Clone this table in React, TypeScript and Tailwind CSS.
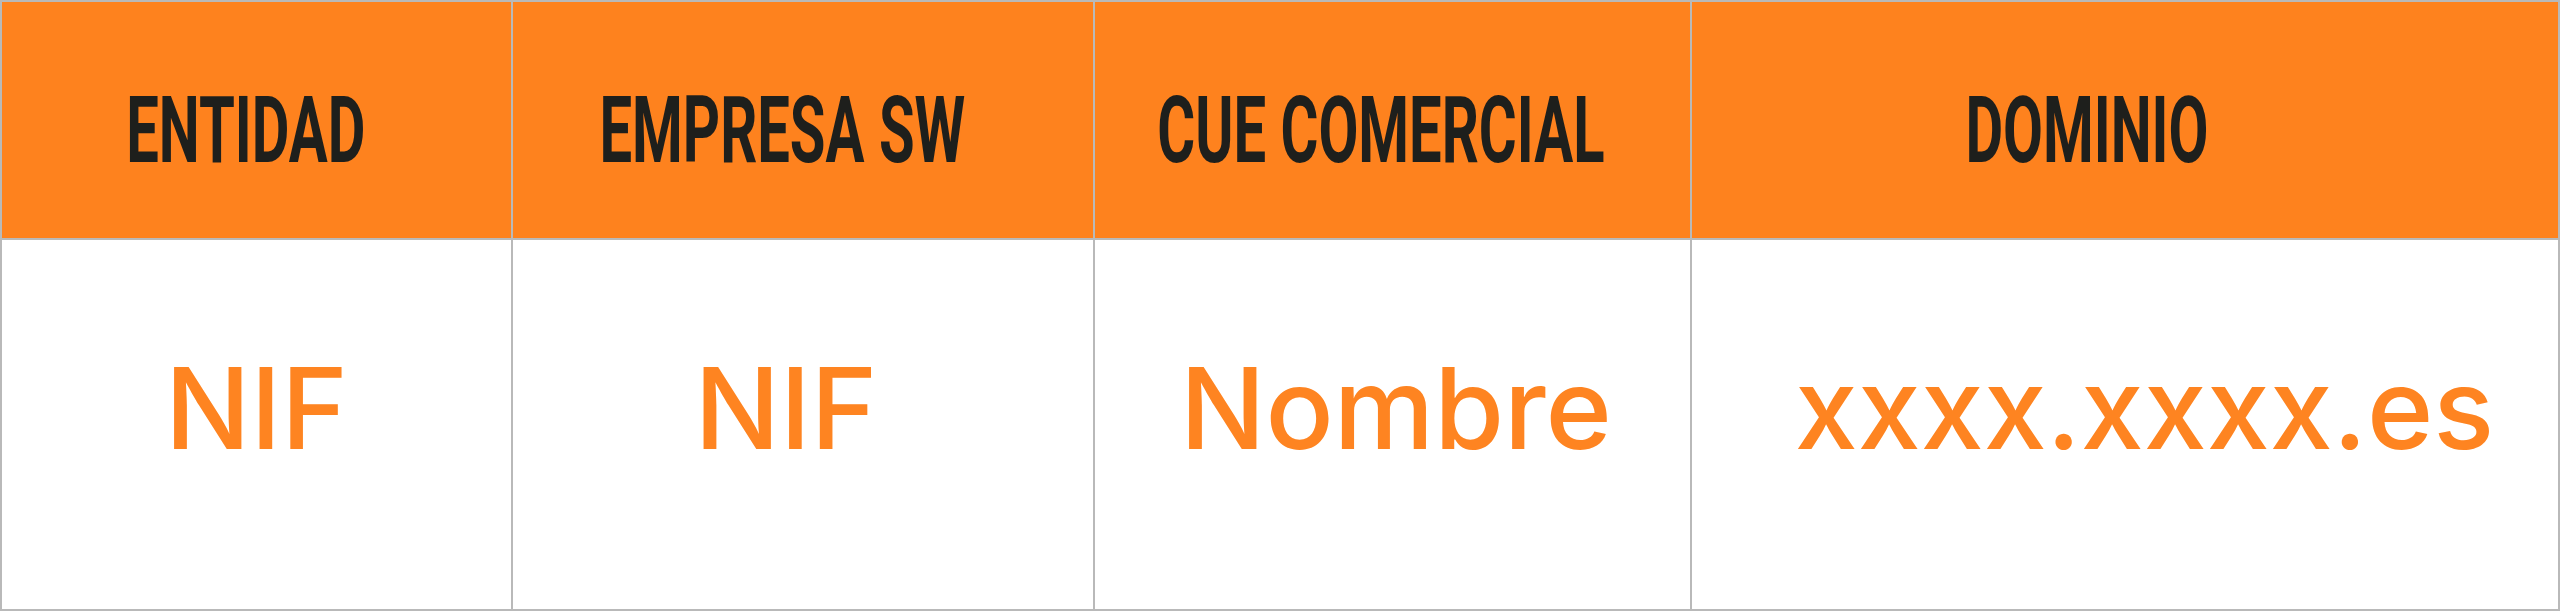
import React from "react";

const headers = [
  { label: "ENTIDAD", pad: "pr-[22px]" },
  { label: "EMPRESA SW", pad: "pr-[41px]" },
  { label: "CUE COMERCIAL", pad: "pr-[24px]" },
  { label: "DOMINIO", pad: "pr-[77px]" },
];

const values = [
  { label: "NIF", pad: "pl-[0px]" },
  { label: "NIF", pad: "pr-[34px]" },
  { label: "Nombre", pad: "pl-[7px]" },
  { label: "xxxx.xxxx.es", pad: "pl-[39px]" },
];

export default function App() {
  return (
    <div className="w-[2560px] h-[612px] bg-white">
      <div className="grid h-[611px] w-[2560px] grid-cols-[509px_580px_595px_1fr] grid-rows-[236px_1fr] gap-[2px] bg-[#b9b9b9] p-[2px]">
        {headers.map((h) => (
          <div
            key={h.label}
            className={`flex items-center justify-center bg-[#fe821e] pt-[22px] ${h.pad}`}
          >
            <span className="inline-block scale-x-[0.63] whitespace-nowrap font-['Roboto',sans-serif] text-[92px] font-bold leading-none text-[#1e1f1c]">
              {h.label}
            </span>
          </div>
        ))}
        {values.map((v, i) => (
          <div
            key={i}
            className={`flex items-center justify-center bg-white pb-[33px] ${v.pad}`}
          >
            <span className="whitespace-nowrap font-['Inter',sans-serif] text-[113px] font-medium leading-none text-[#fe8421]">
              {v.label}
            </span>
          </div>
        ))}
      </div>
    </div>
  );
}
